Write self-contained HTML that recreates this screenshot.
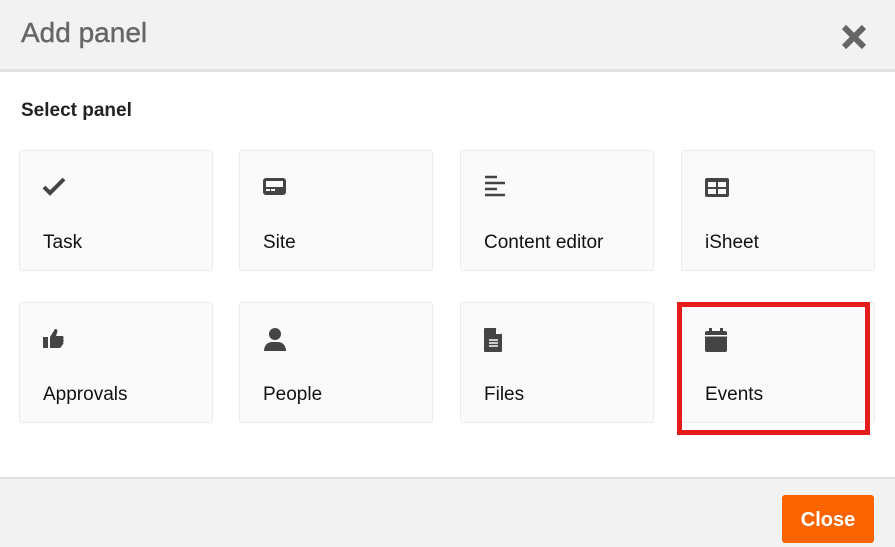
<!DOCTYPE html>
<html><head><meta charset="utf-8"><style>
*{margin:0;padding:0;box-sizing:border-box}
body{width:895px;height:547px;background:#fff;font-family:"Liberation Sans",Arial,sans-serif;position:relative;overflow:hidden}
.hdr{position:absolute;left:0;top:0;width:895px;height:72px;background:#f2f2f2;border-bottom:3px solid #e2e2e2}
.hdr h1{position:absolute;left:21px;top:17px;font-size:28px;font-weight:normal;color:#666;-webkit-text-stroke:0.4px #666}
.x{position:absolute;left:840px;top:23px}
.sel{position:absolute;left:21px;top:100px;font-size:19px;font-weight:bold;color:#222}
.card{position:absolute;width:194px;height:121px;background:#fafafa;border:1px solid #ececec;border-radius:3px}
.card svg{position:absolute;left:22px;top:24px}
.card span{position:absolute;left:23px;top:81px;font-size:19px;color:#111}
.red{position:absolute;left:677px;top:302px;width:193px;height:133px;border:5px solid #e51c1c}
.ftr{position:absolute;left:0;top:477px;width:895px;height:70px;background:#f2f2f2;border-top:2px solid #e2e2e2}
.btn{position:absolute;left:782px;top:495px;width:92px;height:48px;background:#f96400;border-radius:3px;color:#fff;font-weight:bold;font-size:20px;text-align:center;line-height:50px}
</style></head><body>
<div class="hdr"><h1>Add panel</h1>
<svg class="x" width="28" height="28" viewBox="0 0 28 28"><path d="M4 4L24 24M24 4L4 24" stroke="#666" stroke-width="6"/></svg></div>
<div class="sel">Select panel</div>
<div class="card" style="left:19px;top:150px"><svg width="24" height="24" viewBox="0 0 24 24"><path d="M2 12l6 6L22 4" stroke="#444" stroke-width="4" fill="none"/></svg><span>Task</span></div>
<div class="card" style="left:239px;top:150px"><svg width="24" height="24" viewBox="0 0 24 24"><rect x="1" y="3" width="23" height="17" rx="3" fill="#444"/><rect x="4" y="6" width="17" height="6" fill="#fafafa"/><rect x="4" y="14" width="4" height="2" fill="#fafafa"/><rect x="9" y="14" width="4" height="2" fill="#fafafa"/></svg><span>Site</span></div>
<div class="card" style="left:460px;top:150px"><svg width="24" height="24" viewBox="0 0 24 24"><path d="M2 2h12M2 8h20M2 14h12M2 20h20" stroke="#444" stroke-width="2.5"/></svg><span>Content editor</span></div>
<div class="card" style="left:681px;top:150px"><svg width="26" height="24" viewBox="0 0 26 24"><rect x="1" y="3" width="24" height="19" rx="2" fill="#444"/><rect x="4" y="7" width="8" height="5" fill="#fafafa"/><rect x="14" y="7" width="8" height="5" fill="#fafafa"/><rect x="4" y="14" width="8" height="5" fill="#fafafa"/><rect x="14" y="14" width="8" height="5" fill="#fafafa"/></svg><span>iSheet</span></div>
<div class="card" style="left:19px;top:302px"><svg width="24" height="24" viewBox="0 0 24 24"><rect x="1" y="10" width="5" height="11" fill="#444"/><path d="M8 10l5-8c2 0 3 1 2 4l-1 3h6c2 0 2 2 1 3 1 1 1 2 0 3 1 1 0 3-1 3 0 1-1 3-3 3H8z" fill="#444"/></svg><span>Approvals</span></div>
<div class="card" style="left:239px;top:302px"><svg width="26" height="26" viewBox="0 0 26 26"><circle cx="13" cy="7" r="6" fill="#444"/><path d="M2 24c0-6 4-9 8-9h6c4 0 8 3 8 9z" fill="#444"/></svg><span>People</span></div>
<div class="card" style="left:460px;top:302px"><svg width="24" height="26" viewBox="0 0 24 26"><path d="M2 1h11l6 6v17a1 1 0 0 1-1 1H2a1 1 0 0 1-1-1V2a1 1 0 0 1 1-1z" fill="#444"/><path d="M13 1v6h6" fill="#fafafa"/><path d="M6 13h9M6 16h9M6 19h9" stroke="#fafafa" stroke-width="1.5"/></svg><span>Files</span></div>
<div class="card" style="left:681px;top:302px"><svg width="24" height="26" viewBox="0 0 24 26"><rect x="1" y="4" width="22" height="21" rx="2" fill="#444"/><rect x="5" y="1" width="3" height="5" fill="#444"/><rect x="16" y="1" width="3" height="5" fill="#444"/><rect x="1" y="8" width="22" height="1.5" fill="#fafafa"/></svg><span>Events</span></div>
<div class="red"></div>
<div class="ftr"></div>
<div class="btn">Close</div>
</body></html>
